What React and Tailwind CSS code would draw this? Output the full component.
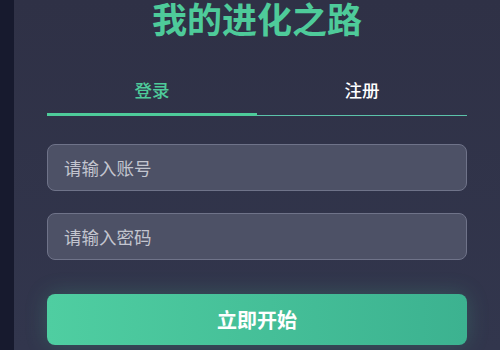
import React from 'react';

const App = () => {
  return (
    <div
      className="w-[500px] h-[350px] overflow-hidden bg-[#171a2e] flex"
      style={{ fontFamily: '"Noto Sans CJK SC", "Noto Sans", sans-serif' }}
    >
      {/* Card */}
      <div className="ml-[14px] flex-1 bg-gradient-to-b from-[#2f3146] to-[#32364d] px-[33px]">
        <h1 className="-mt-[2px] h-[40px] leading-[40px] text-center text-[35px] font-bold text-[#4ecb9a]">
          我的进化之路
        </h1>

        {/* Tabs */}
        <div className="mt-[27px] flex border-b border-[#5cc3aa]">
          <button className="relative flex-1 h-[50px] flex items-center justify-center text-[17.5px] font-medium text-[#4ecb9a]">
            登录
            <span className="absolute left-0 right-0 -bottom-px h-[3px] bg-[#4ecb9a]" />
          </button>
          <button className="flex-1 h-[50px] flex items-center justify-center text-[17.5px] font-medium text-white">
            注册
          </button>
        </div>

        {/* Form */}
        <div className="mt-[28px] flex flex-col">
          <input
            placeholder="请输入账号"
            className="h-[47px] w-full rounded-lg border border-[#6f7389] bg-[#4d5166] px-[16px] text-[17.5px] text-white placeholder:text-[#c3c5cf] outline-none"
          />
          <input
            type="password"
            placeholder="请输入密码"
            className="mt-[22px] h-[47px] w-full rounded-lg border border-[#6f7389] bg-[#4d5166] px-[16px] text-[17.5px] text-white placeholder:text-[#c3c5cf] outline-none"
          />
          <button className="mt-[34px] h-[51px] w-full rounded-lg bg-gradient-to-r from-[#4fcea1] to-[#3cb290] text-[20px] font-bold text-white shadow-[0_0_22px_rgba(78,203,154,0.22)]">
            立即开始
          </button>
        </div>
      </div>
    </div>
  );
};

export default App;
